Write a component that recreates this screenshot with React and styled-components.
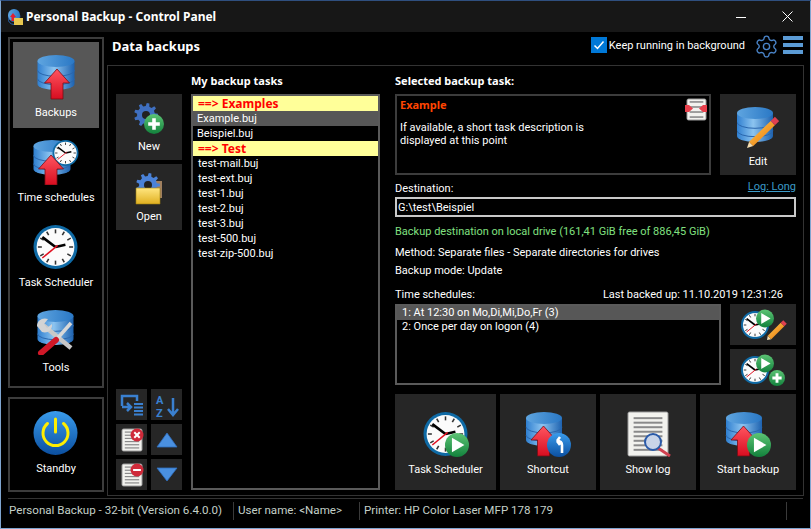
import React from 'react'
import styled, { createGlobalStyle } from 'styled-components'
import { Settings } from 'lucide-react'

const GlobalStyle = createGlobalStyle`
html, body { margin:0; padding:0; background:#000; }
body { font-family:Roboto, "Noto Sans", "Liberation Sans", sans-serif; font-size:11px; color:#fff; }
* { box-sizing:border-box; }
`
const Win = styled.div`
width:811px;
height:529px;
display:flex;
flex-direction:column;
background:#000;
border:1px solid #7fa5d0;
border-top-color:#2f4f7f;
overflow:hidden;
`
const TitleBar = styled.div`
height:31px;
flex:none;
display:flex;
align-items:center;
padding-left:7px;
background:#171717;
`
const TitleText = styled.div`
margin-left:3px;
font-family:"Noto Sans", sans-serif;
font-size:12px;
font-weight:700;
`
const WinControls = styled.div`
margin-left:auto;
display:flex;
align-items:center;
height:100%;
`
const WinButton = styled.div`
width:46px;
height:100%;
display:flex;
align-items:center;
justify-content:center;
`
const Body = styled.div`
flex:none;
height:464px;
display:flex;
padding:5px 6px 0 7px;
`
const Side = styled.div`
width:96px;
flex:none;
display:flex;
flex-direction:column;
gap:9px;
margin-right:3px;
`
const SideBox = styled.div`
border:2px solid #3c3c3c;
padding:3px;
display:flex;
flex-direction:column;
height:${p => p.$h}px;
`
const Big = styled.div`
flex:${p => p.$grow ? '1' : 'none'};
display:flex;
flex-direction:column;
align-items:center;
justify-content:flex-end;
height:${p => p.$h}px;
margin-bottom:${p => p.$mb || 0}px;
padding-bottom:${p => p.$pb || 7}px;
background:${p => p.$bg || '#262626'};
`
const BigLabel = styled.div`
height:14px;
padding-top:1px;
line-height:14px;
margin-top:${p => p.$mt || 5}px;
white-space:nowrap;
`
const Main = styled.div`
flex:1;
min-width:0;
display:flex;
flex-direction:column;
`
const MainHead = styled.div`
height:28px;
flex:none;
display:flex;
padding:0 1px 0 5px;
`
const PageTitle = styled.div`
font-family:"Noto Sans", sans-serif;
font-size:13px;
font-weight:700;
line-height:19px;
`
const HeadRight = styled.div`
margin-left:auto;
display:flex;
align-items:flex-start;
`
const Check = styled.div`
width:16px;
height:16px;
background:#0078d7;
display:flex;
align-items:center;
justify-content:center;
margin-right:2px;
`
const CheckLabel = styled.div`
line-height:16px;
padding-top:1px;
margin-right:9px;
`
const Cog = styled(Settings)`
margin-top:-3px;
`
const MenuBars = styled.div`
width:20px;
margin:-1px 0 0 4px;
display:flex;
flex-direction:column;
gap:3px;
`
const MenuBar = styled.div`
height:4px;
background:#5b9bd5;
`
const Panel = styled.div`
height:431px;
border:1px solid #333;
display:flex;
padding:8px 7px 5px 8px;
`
const ToolCol = styled.div`
width:66px;
flex:none;
display:flex;
flex-direction:column;
padding-top:20px;
gap:4px;
margin-right:9px;
`
const SmallGrid = styled.div`
margin-top:auto;
display:grid;
grid-template-columns:31px 31px;
grid-auto-rows:31px;
gap:4px;
`
const SmallBtn = styled.div`
background:#262626;
`
const ListCol = styled.div`
width:189px;
flex:none;
display:flex;
flex-direction:column;
margin-right:15px;
`
const SectionTitle = styled.div`
font-family:"Noto Sans", sans-serif;
font-weight:700;
line-height:14px;
height:14px;
margin-bottom:6px;
white-space:nowrap;
`
const ListBox = styled.div`
flex:1;
border:2px solid #5a5a5a;
`
const ListRow = styled.div`
height:15px;
line-height:15px;
white-space:nowrap;
padding-left:${p => p.$indent || 4}px;
color:${p => p.$head ? '#ff0000' : '#fff'};
font-family:${p => p.$head ? '"Noto Sans", sans-serif' : 'inherit'};
font-size:${p => p.$head ? 12 : 11}px;
font-weight:${p => p.$head ? 700 : 400};
background:${p => p.$head ? '#ffff99' : p.$sel ? '#575757' : 'transparent'};
`
const RightCol = styled.div`
width:401px;
flex:none;
display:flex;
flex-direction:column;
`
const TopRow = styled.div`
display:flex;
gap:9px;
height:81px;
flex:none;
`
const Desc = styled.div`
position:relative;
width:316px;
border:2px solid #3c3c3c;
padding:1px 3px;
line-height:13px;
`
const DescTitle = styled.div`
font-family:"Noto Sans", sans-serif;
color:#ff4500;
font-weight:700;
line-height:15px;
margin-bottom:9px;
`
const DescIcon = styled.div`
position:absolute;
top:2px;
right:1px;
`
const Line = styled.div`
height:14px;
padding-top:1px;
line-height:14px;
flex:none;
display:flex;
justify-content:space-between;
white-space:nowrap;
margin-top:${p => p.$mt}px;
color:${p => p.$color || '#fff'};
`
const LogLink = styled.div`
color:#3b9bc8;
text-decoration:underline;
margin-top:-2px;
`
const LastBacked = styled.div`
margin-right:13px;
`
const DestInput = styled.div`
height:20px;
flex:none;
margin-top:2px;
border:2px solid #c8c8c8;
padding-left:1px;
line-height:18px;
`
const SchedRow = styled.div`
display:flex;
gap:9px;
height:86px;
margin-top:3px;
flex:none;
`
const SchedBox = styled.div`
width:326px;
height:81px;
border:2px solid #5a5a5a;
`
const SchedItem = styled.div`
height:14px;
line-height:14px;
padding-left:5px;
background:${p => p.$sel ? '#575757' : 'transparent'};
`
const SchedBtns = styled.div`
flex:1;
display:flex;
flex-direction:column;
gap:4px;
`
const SchedBtn = styled.div`
height:41px;
display:flex;
align-items:center;
justify-content:center;
background:#262626;
`
const ActionRow = styled.div`
display:grid;
grid-template-columns:101px 96px 96px 96px;
gap:4px;
height:96px;
margin-top:4px;
flex:none;
`
const Status = styled.div`
margin:2px 7px 0 7px;
padding-bottom:6px;
border-top:1px solid #333;
flex:1;
display:flex;
align-items:center;
color:#c4d0c8;
font-size:11.6px;
`
const StatusCell = styled.div`
height:18px;
line-height:16px;
white-space:nowrap;
width:${p => p.$w}px;
flex:${p => p.$w ? 'none' : '1'};
padding-left:${p => p.$pl || 4}px;
border-right:${p => p.$w ? '1px solid #3a3a3a' : 'none'};
`
const Grip = styled.div`
width:17px;
height:18px;
border-left:1px solid #3a3a3a;
`
const HiddenSvg = styled.svg`
position:absolute;
width:0;
height:0;
`
const IconSvg = styled.svg`
display:block;
flex:none;
`

const gearPath = (cx, cy, outer, inner, teeth) => {
    let d = ''
    const step = Math.PI * 2 / teeth
    for (let i = 0; i < teeth; i++) {
        const a = i * step
        const pts = [
            [outer, a - step * 0.16], [outer, a + step * 0.16],
            [inner, a + step * 0.3], [inner, a + step * 0.7],
        ]
        pts.forEach(([r, t], j) => {
            d += `${i === 0 && j === 0 ? 'M' : 'L'}${(cx + r * Math.cos(t)).toFixed(2)} ${(cy + r * Math.sin(t)).toFixed(2)}`
        })
    }
    return d + 'Z'
}

const Gradients = () => (
    <HiddenSvg aria-hidden="true">
        <defs>
            <linearGradient id="dbG" x1="0" x2="1" y1="0" y2="0">
                <stop offset="0" stopColor="#2f7fd0" />
                <stop offset="0.45" stopColor="#8cc4f0" />
                <stop offset="1" stopColor="#1d62b0" />
            </linearGradient>
            <linearGradient id="dbTop" x1="0" x2="1" y1="0" y2="0">
                <stop offset="0" stopColor="#5fa5e0" />
                <stop offset="1" stopColor="#2a78c5" />
            </linearGradient>
            <linearGradient id="redG" x1="0" x2="0" y1="0" y2="1">
                <stop offset="0" stopColor="#ff5560" />
                <stop offset="1" stopColor="#d80d20" />
            </linearGradient>
            <linearGradient id="greenG" x1="0" x2="0" y1="0" y2="1">
                <stop offset="0" stopColor="#5cc474" />
                <stop offset="1" stopColor="#12813c" />
            </linearGradient>
            <linearGradient id="blueG" x1="0" x2="0" y1="0" y2="1">
                <stop offset="0" stopColor="#3a9cec" />
                <stop offset="1" stopColor="#0b4fa0" />
            </linearGradient>
            <linearGradient id="pencilG" x1="0" x2="1" y1="0" y2="1">
                <stop offset="0" stopColor="#ffc04a" />
                <stop offset="1" stopColor="#e87d10" />
            </linearGradient>
            <linearGradient id="folderG" x1="0" x2="0" y1="0" y2="1">
                <stop offset="0" stopColor="#ffe680" />
                <stop offset="1" stopColor="#e0b020" />
            </linearGradient>
        </defs>
    </HiddenSvg>
)

const Db = ({ x = 0, y = 0, w = 36, h = 34 }) => {
    const r = w / 2, ry = 6
    return (
        <g transform={`translate(${x} ${y})`}>
            <path d={`M0 ${ry}V${h - ry}A${r} ${ry} 0 0 0 ${w} ${h - ry}V${ry}Z`} fill="url(#dbG)" />
            <path d={`M0 ${h * 0.38 + 2}A${r} ${ry} 0 0 0 ${w} ${h * 0.38 + 2}`} fill="none" stroke="#2a66ad" strokeWidth="1" />
            <path d={`M0 ${h * 0.62 + 2}A${r} ${ry} 0 0 0 ${w} ${h * 0.62 + 2}`} fill="none" stroke="#2a66ad" strokeWidth="1" />
            <ellipse cx={r} cy={ry} rx={r} ry={ry} fill="url(#dbTop)" />
        </g>
    )
}
const Arrow = ({ x = 0, y = 0 }) => (
    <path transform={`translate(${x} ${y})`} d="M12.5 0L25 14H18.5V30H6.5V14H0Z" fill="url(#redG)" stroke="#7a0c14" strokeWidth="0.8" />
)
const Clock = ({ cx, cy, r }) => {
    const ticks = []
    for (let i = 0; i < 12; i++) {
        const a = i * Math.PI / 6
        const c = Math.cos(a), s = Math.sin(a)
        ticks.push(<line key={i} x1={cx + c * r * 0.62} y1={cy + s * r * 0.62} x2={cx + c * r * 0.8} y2={cy + s * r * 0.8} stroke="#333" strokeWidth={Math.max(0.8, r * 0.07)} />)
    }
    return (
        <g>
            <circle cx={cx} cy={cy} r={r} fill="#0f6aa5" />
            <circle cx={cx} cy={cy} r={r * 0.86} fill="#fbfbfb" />
            {ticks}
            <line x1={cx} y1={cy} x2={cx - r * 0.6} y2={cy - r * 0.45} stroke="#000" strokeWidth={r * 0.12} />
            <line x1={cx} y1={cy} x2={cx + r * 0.45} y2={cy - r * 0.1} stroke="#000" strokeWidth={r * 0.12} />
            <line x1={cx + r * 0.1} y1={cy - r * 0.07} x2={cx - r * 0.6} y2={cy + r * 0.5} stroke="#e01020" strokeWidth={r * 0.07} />
        </g>
    )
}
const Play = ({ cx, cy, r }) => (
    <g>
        <circle cx={cx} cy={cy} r={r} fill="url(#greenG)" />
        <path d={`M${cx - r * 0.42} ${cy - r * 0.6}L${cx + r * 0.62} ${cy}L${cx - r * 0.42} ${cy + r * 0.6}Z`} fill="#fff" />
    </g>
)
const Plus = ({ cx, cy, r }) => (
    <g>
        <circle cx={cx} cy={cy} r={r} fill="url(#greenG)" />
        <path d={`M${cx - r * 0.58} ${cy}H${cx + r * 0.58}M${cx} ${cy - r * 0.58}V${cy + r * 0.58}`} stroke="#fff" strokeWidth={r * 0.36} />
    </g>
)
const Pencil = ({ x1, y1, x2, y2, w = 6 }) => {
    const dx = x2 - x1, dy = y2 - y1
    const tipx = x1 + dx * 0.14, tipy = y1 + dy * 0.14
    const endx = x1 + dx * 0.86, endy = y1 + dy * 0.86
    const len = Math.hypot(dx, dy)
    const nx = -dy / len * w / 2, ny = dx / len * w / 2
    return (
        <g>
            <path d={`M${x1} ${y1}L${tipx + nx} ${tipy + ny}L${tipx - nx} ${tipy - ny}Z`} fill="#f4dcb0" />
            <line x1={tipx} y1={tipy} x2={endx} y2={endy} stroke="url(#pencilG)" strokeWidth={w} />
            <line x1={endx} y1={endy} x2={x2} y2={y2} stroke="#e04050" strokeWidth={w} />
        </g>
    )
}
const Doc = ({ x, y, w, h, lines = 6, sw = 1.4 }) => {
    const rows = []
    for (let i = 0; i < lines; i++) {
        const ly = y + h * 0.14 + i * (h * 0.72 / (lines - 1))
        rows.push(<line key={i} x1={x + w * 0.14} y1={ly} x2={x + w * 0.86} y2={ly} stroke="#8a8a8a" strokeWidth={sw} />)
    }
    return (
        <g>
            <rect x={x} y={y} width={w} height={h} rx="1.5" fill="#f2f2ee" stroke="#9a9a9a" strokeWidth="1" />
            {rows}
        </g>
    )
}
const RedBadge = ({ cx, cy, r, minus }) => (
    <g>
        <circle cx={cx} cy={cy} r={r} fill="#cf2a3a" />
        {minus
            ? <path d={`M${cx - r * 0.6} ${cy}H${cx + r * 0.6}`} stroke="#fff" strokeWidth="2" />
            : <path d={`M${cx - r * 0.42} ${cy - r * 0.42}L${cx + r * 0.42} ${cy + r * 0.42}M${cx + r * 0.42} ${cy - r * 0.42}L${cx - r * 0.42} ${cy + r * 0.42}`} stroke="#fff" strokeWidth="2" />}
    </g>
)
const Icon = ({ w = 48, h = 48, children }) => (
    <IconSvg width={w} height={h} viewBox={`0 0 ${w} ${h}`}>{children}</IconSvg>
)

const BackupsIcon = () => <Icon><Db x={5.5} y={3} w={37} h={35} /><Arrow x={12.5} y={17} /></Icon>
const ScheduleIcon = () => <Icon><Db x={1.5} y={3} w={37} h={35} /><Clock cx={33.5} cy={16} r={13} /><Arrow x={6.5} y={18} /></Icon>
const ClockIcon = () => <Icon><Clock cx={23.5} cy={25} r={22} /></Icon>
const ToolsIcon = () => (
    <Icon>
        <Db x={5.5} y={3} w={36} h={35} />
        <line x1="11" y1="18" x2="39" y2="41" stroke="#c8c8c8" strokeWidth="4.5" />
        <path d="M5 19C5 13 11 10 16 12L12 17L15 21L20 17C21 22 16 27 10 25Z" fill="#d4d4d4" />
        <line x1="39" y1="16" x2="24" y2="33" stroke="#d8d8d8" strokeWidth="3.5" />
        <line x1="24" y1="33" x2="9" y2="46" stroke="#d01828" strokeWidth="6" strokeLinecap="round" />
    </Icon>
)
const PowerIcon = () => (
    <Icon>
        <circle cx="23.5" cy="25" r="22" fill="url(#blueG)" />
        <path d="M15.5 15.5A12.5 12.5 0 1 0 31.5 15.5" fill="none" stroke="#ffee00" strokeWidth="3" strokeLinecap="round" />
        <line x1="23.5" y1="11" x2="23.5" y2="24" stroke="#ffee00" strokeWidth="3" strokeLinecap="round" />
    </Icon>
)
const NewIcon = () => (
    <Icon w={32} h={32}>
        <path d={gearPath(13, 12, 12, 9, 9)} fill="#3f6fc0" />
        <circle cx="13" cy="12" r="4" fill="#222" />
        <Plus cx={21} cy={21} r={10} />
    </Icon>
)
const OpenIcon = () => (
    <Icon w={32} h={32}>
        <path d="M22 8H29V25H22Z" fill="#a08060" />
        <path d={gearPath(15, 12, 12, 9, 9)} fill="#4a82d8" />
        <circle cx="15" cy="12" r="4" fill="#222" />
        <path d="M3 15H27V31H3Z" fill="url(#folderG)" stroke="#a08010" strokeWidth="0.6" />
    </Icon>
)
const EditIcon = () => (
    <Icon w={42} h={42}>
        <Db x={0} y={0} w={36} h={35} />
        <Pencil x1={10} y1={41} x2={40} y2={12} />
    </Icon>
)
const SchedStartIcon = () => <Icon><Clock cx={23.5} cy={25} r={22} /><Play cx={35} cy={36} r={12} /></Icon>
const ShortcutIcon = () => (
    <Icon>
        <Db x={2} y={3} w={36} h={34} />
        <Arrow x={7} y={17} />
        <circle cx="35" cy="36" r="12" fill="url(#blueG)" />
        <path d="M38 44V36C38 33 36 32 33 32M33 32L36 28M33 32L36 36" fill="none" stroke="#fff" strokeWidth="2.6" />
    </Icon>
)
const LogIcon = () => (
    <Icon>
        <Doc x={4} y={3} w={40} h={44} lines={8} sw={2} />
        <line x1="34" y1="39" x2="46" y2="47" stroke="#d04050" strokeWidth="3" />
        <circle cx="29" cy="33" r="8" fill="#c8d4e8" stroke="#2a5aa8" strokeWidth="2" />
    </Icon>
)
const StartIcon = () => (
    <Icon>
        <Db x={2} y={3} w={36} h={34} />
        <Arrow x={7} y={17} />
        <Play cx={35} cy={36} r={12} />
    </Icon>
)
const SchedEditIcon = () => (
    <Icon w={60} h={40}>
        <Clock cx={22} cy={20} r={14} />
        <Play cx={32} cy={13.5} r={9} />
        <Pencil x1={34} y1={35} x2={52} y2={17} w={5} />
    </Icon>
)
const SchedAddIcon = () => (
    <Icon w={60} h={40}>
        <Clock cx={22} cy={20} r={14} />
        <Play cx={32} cy={13.5} r={9} />
        <Plus cx={44} cy={28} r={8} />
    </Icon>
)
const DescDocIcon = () => (
    <Icon w={24} h={24}>
        <Doc x={3} y={1} w={19} h={21} lines={4} sw={1.6} />
        <path d="M1 7H5L9 10.5L5 14H1ZM23 7H19L15 10.5L19 14H23Z" fill="#e8404c" />
    </Icon>
)
const TitleIcon = () => (
    <Icon w={15} h={16}>
        <Db x={0} y={0} w={12} h={12} />
        <path d="M2 8L5 4L8 8H6.5V12H3.5V8Z" fill="#e02030" />
        <path d="M6 9H15V16H6Z" fill="#e8c850" />
    </Icon>
)
const MoveIcon = () => (
    <Icon w={31} h={31}>
        <path d="M6 17V7H21V12" fill="none" stroke="#3a80d0" strokeWidth="2.5" />
        <path d="M6 18H15M11 14L15 18L11 22" fill="none" stroke="#3a80d0" strokeWidth="2.5" />
        <path d="M18 15H27M18 18.5H27M18 22H27M18 25.5H27" stroke="#3a80d0" strokeWidth="1.8" />
    </Icon>
)
const SortIcon = () => (
    <Icon w={31} h={31}>
        <text x="5" y="14.5" fontFamily="Roboto" fontWeight="700" fontSize="11" fill="#3a80d0">A</text>
        <text x="5" y="27.5" fontFamily="Roboto" fontWeight="700" fontSize="11" fill="#3a80d0">Z</text>
        <path d="M22 9V26M17 20L22 26L27 20" fill="none" stroke="#3a80d0" strokeWidth="2.5" />
    </Icon>
)
const TriUpIcon = () => <Icon w={31} h={31}><path d="M16 9L26 23H6Z" fill="#4a90e0" stroke="#2f6fc0" strokeWidth="0.8" /></Icon>
const TriDownIcon = () => <Icon w={31} h={31}><path d="M6 9H26L16 22Z" fill="#4a90e0" stroke="#2f6fc0" strokeWidth="0.8" /></Icon>
const DocXIcon = () => <Icon w={31} h={31}><Doc x={6} y={5} w={20} h={22} lines={6} sw={1.2} /><RedBadge cx={21} cy={11} r={6.5} /></Icon>
const DocMinusIcon = () => <Icon w={31} h={31}><Doc x={6} y={5} w={20} h={22} lines={6} sw={1.2} /><RedBadge cx={21} cy={11} r={6.5} minus /></Icon>

const sideItems = [
    { label: 'Backups', icon: <BackupsIcon />, active: true },
    { label: 'Time schedules', icon: <ScheduleIcon /> },
    { label: 'Task Scheduler', icon: <ClockIcon /> },
    { label: 'Tools', icon: <ToolsIcon /> },
]
const tasks = [
    { text: '==> Examples', head: true },
    { text: 'Example.buj', sel: true },
    { text: 'Beispiel.buj' },
    { text: '==> Test', head: true },
    { text: 'test-mail.buj', indent: 5 },
    { text: 'test-ext.buj', indent: 5 },
    { text: 'test-1.buj', indent: 5 },
    { text: 'test-2.buj', indent: 5 },
    { text: 'test-3.buj', indent: 5 },
    { text: 'test-500.buj', indent: 5 },
    { text: 'test-zip-500.buj', indent: 5 },
]
const actions = [
    { label: 'Task Scheduler', icon: <SchedStartIcon /> },
    { label: 'Shortcut', icon: <ShortcutIcon /> },
    { label: 'Show log', icon: <LogIcon /> },
    { label: 'Start backup', icon: <StartIcon /> },
]

const App = () => {
    return (
        <>
            <GlobalStyle />
            <Gradients />
            <Win>
                <TitleBar>
                    <TitleIcon />
                    <TitleText>Personal Backup - Control Panel</TitleText>
                    <WinControls>
                        <WinButton>
                            <svg width="10" height="10" viewBox="0 0 10 10"><line x1="0" y1="5.5" x2="10" y2="5.5" stroke="#fff" /></svg>
                        </WinButton>
                        <WinButton>
                            <svg width="11" height="11" viewBox="0 0 11 11"><path d="M0.5 0.5L10.5 10.5M10.5 0.5L0.5 10.5" stroke="#fff" /></svg>
                        </WinButton>
                    </WinControls>
                </TitleBar>
                <Body>
                    <Side>
                        <SideBox $h={351}>
                            {sideItems.map((item) => (
                                <Big key={item.label} $h={86} $mb={-1} $pb={9} $bg={item.active ? '#575757' : 'transparent'}>
                                    {item.icon}
                                    <BigLabel>{item.label}</BigLabel>
                                </Big>
                            ))}
                        </SideBox>
                        <SideBox $h={95}>
                            <Big $h={85} $pb={12} $bg="transparent">
                                <PowerIcon />
                                <BigLabel>Standby</BigLabel>
                            </Big>
                        </SideBox>
                    </Side>
                    <Main>
                        <MainHead>
                            <PageTitle>Data backups</PageTitle>
                            <HeadRight>
                                <Check>
                                    <svg width="12" height="12" viewBox="0 0 12 12"><path d="M1.5 6.5L4.5 9.5L10.5 2.5" fill="none" stroke="#fff" strokeWidth="1.5" /></svg>
                                </Check>
                                <CheckLabel>Keep running in background</CheckLabel>
                                <Cog size={25} color="#4a84c8" strokeWidth={1.3} />
                                <MenuBars><MenuBar /><MenuBar /><MenuBar /></MenuBars>
                            </HeadRight>
                        </MainHead>
                        <Panel>
                            <ToolCol>
                                <Big $h={66}><NewIcon /><BigLabel $mt={4}>New</BigLabel></Big>
                                <Big $h={66}><OpenIcon /><BigLabel $mt={4}>Open</BigLabel></Big>
                                <SmallGrid>
                                    <SmallBtn><MoveIcon /></SmallBtn>
                                    <SmallBtn><SortIcon /></SmallBtn>
                                    <SmallBtn><DocXIcon /></SmallBtn>
                                    <SmallBtn><TriUpIcon /></SmallBtn>
                                    <SmallBtn><DocMinusIcon /></SmallBtn>
                                    <SmallBtn><TriDownIcon /></SmallBtn>
                                </SmallGrid>
                            </ToolCol>
                            <ListCol>
                                <SectionTitle>My backup tasks</SectionTitle>
                                <ListBox>
                                    {tasks.map((t) => (
                                        <ListRow key={t.text} $head={t.head} $sel={t.sel} $indent={t.head ? 5 : t.indent}>{t.text}</ListRow>
                                    ))}
                                </ListBox>
                            </ListCol>
                            <RightCol>
                                <SectionTitle>Selected backup task:</SectionTitle>
                                <TopRow>
                                    <Desc>
                                        <DescTitle>Example</DescTitle>
                                        <div>If available, a short task description is</div>
                                        <div>displayed at this point</div>
                                        <DescIcon><DescDocIcon /></DescIcon>
                                    </Desc>
                                    <Big $h={81} $pb={7} $grow>
                                        <EditIcon />
                                        <BigLabel $mt={5}>Edit</BigLabel>
                                    </Big>
                                </TopRow>
                                <Line $mt={6}>
                                    <span>Destination:</span>
                                    <LogLink>Log: Long</LogLink>
                                </Line>
                                <DestInput>G:\test\Beispiel</DestInput>
                                <Line $mt={7} $color="#80e080">Backup destination on local drive (161,41 GiB free of 886,45 GiB)</Line>
                                <Line $mt={7}>Method: Separate files - Separate directories for drives</Line>
                                <Line $mt={4}>Backup mode: Update</Line>
                                <Line $mt={10}>
                                    <span>Time schedules:</span>
                                    <LastBacked>Last backed up: 11.10.2019 12:31:26</LastBacked>
                                </Line>
                                <SchedRow>
                                    <SchedBox>
                                        <SchedItem $sel>1: At 12:30 on Mo,Di,Mi,Do,Fr (3)</SchedItem>
                                        <SchedItem>2: Once per day on logon (4)</SchedItem>
                                    </SchedBox>
                                    <SchedBtns>
                                        <SchedBtn><SchedEditIcon /></SchedBtn>
                                        <SchedBtn><SchedAddIcon /></SchedBtn>
                                    </SchedBtns>
                                </SchedRow>
                                <ActionRow>
                                    {actions.map((a) => (
                                        <Big key={a.label} $h={96} $pb={14}>
                                            {a.icon}
                                            <BigLabel>{a.label}</BigLabel>
                                        </Big>
                                    ))}
                                </ActionRow>
                            </RightCol>
                        </Panel>
                    </Main>
                </Body>
                <Status>
                    <StatusCell $w={226} $pl={1}>Personal Backup - 32-bit (Version 6.4.0.0)</StatusCell>
                    <StatusCell $w={126}>User name: &lt;Name&gt;</StatusCell>
                    <StatusCell>Printer: HP Color Laser MFP 178 179</StatusCell>
                    <Grip />
                </Status>
            </Win>
        </>
    )
}
export default App
